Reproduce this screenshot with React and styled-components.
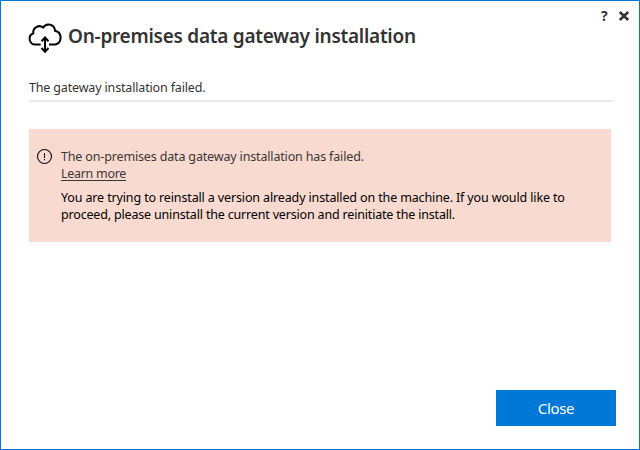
import React from "react";
import styled, { createGlobalStyle } from "styled-components";

const Global = createGlobalStyle`
  * { box-sizing: border-box; }
  body { margin: 0; font-family: "Noto Sans", "Open Sans", sans-serif; }
`;

const Window = styled.main`
  width: 640px;
  height: 450px;
  display: flex;
  flex-direction: column;
  background: #fff;
  border: 1px solid #0078d7;
  color: #333;
`;

const TitleBar = styled.header`
  height: 20px;
  display: flex;
  justify-content: flex-end;
  align-items: flex-start;
  gap: 9px;
  padding: 8px 10px 0 0;
`;

const WindowButton = styled.button`
  display: flex;
  padding: 0;
  border: 0;
  background: none;
  width: ${(p) => p.$width}px;
  height: 14px;
  font: 700 14px/14px "Noto Sans", sans-serif;
  color: #333;
`;

const Heading = styled.div`
  display: flex;
  gap: 4px;
  padding: 0 0 0 27px;
  height: 56px;
`;

const Title = styled.h1`
  margin: 1px 0 0;
  font-size: 19px;
  line-height: 28px;
  font-weight: 600;
  letter-spacing: -0.26px;
  white-space: nowrap;
`;

const Icon = styled.svg`
  flex: none;
  overflow: visible;
`;

const Status = styled.p`
  margin: 0 26px 0 28px;
  height: 25px;
  padding-top: 1px;
  font-size: 12.5px;
  line-height: 20px;
  letter-spacing: -0.16px;
  border-bottom: 2px solid #e8e8e8;
`;

const Alert = styled.section`
  margin: 27px 28px 0 28px;
  height: 113px;
  padding: 19px 8px 0;
  display: flex;
  gap: 8px;
  background: #f8dad0;
  font-size: 12.5px;
  line-height: 17px;
`;

const Message = styled.p`
  margin: 0 0 7px;
  white-space: nowrap;
  color: ${(p) => (p.$strong ? "#000" : "#3b3735")};
`;

const Line = styled.span`
  display: block;
  letter-spacing: ${(p) => p.$tracking}px;
`;

const Link = styled.a`
  text-decoration: underline;
  text-underline-offset: 2px;
`;

const Footer = styled.footer`
  margin-top: auto;
  padding: 0 23px 23px 0;
  display: flex;
  justify-content: flex-end;
`;

const CloseButton = styled.button`
  width: 120px;
  height: 36px;
  padding: 1px 0 0;
  border: 0;
  background: #0078d7;
  color: #fff;
  font: 400 15px/35px "Noto Sans", sans-serif;
  letter-spacing: -0.35px;
`;

export default function App() {
  return (
    <Window>
      <Global />
      <TitleBar>
        <WindowButton $width={9}>?</WindowButton>
        <WindowButton $width={10}>
          <Icon width="10" height="14" viewBox="0 0 10 14" stroke="#333" strokeWidth="2.6">
            <path d="M.8 3l8.400 8M9.200 3L.8 11" />
          </Icon>
        </WindowButton>
      </TitleBar>
      <Heading>
        <Icon width="36" height="34" viewBox="0 0 36 34" fill="none" stroke="#000" strokeWidth="2">
          <path d="M12.700 23.500H7.500A5.800 5.800 0 0 1 5.300 12.300A6.200 6.200 0 0 1 15.200 6.500A6.400 6.400 0 0 1 27 9.700A7.100 7.100 0 0 1 27.300 23.500H21" />
          <path d="M17 17v13.500M13.500 20.200l3.500-3.700 3.500 3.700M13.500 27l3.500 3.700 3.500-3.700" />
        </Icon>
        <Title>On-premises data gateway installation</Title>
      </Heading>
      <Status>The gateway installation failed.</Status>
      <Alert>
        <Icon width="16" height="16" viewBox="0 0 16 16" fill="none" stroke="#111" strokeWidth="1.1">
          <circle cx="7.500" cy="8.500" r="7" />
          <path d="M7.500 5v5M7.500 11v1.300" />
        </Icon>
        <div>
          <Message>
            <Line $tracking={-0.155}>The on-premises data gateway installation has failed.</Line>
            <Line $tracking={-0.29}>
              <Link>Learn more</Link>
            </Line>
          </Message>
          <Message $strong>
            <Line $tracking={-0.135}>
              You are trying to reinstall a version already installed on the machine. If you would like to
            </Line>
            <Line $tracking={-0.175}>
              proceed, please uninstall the current version and reinitiate the install.
            </Line>
          </Message>
        </div>
      </Alert>
      <Footer>
        <CloseButton>Close</CloseButton>
      </Footer>
    </Window>
  );
}
